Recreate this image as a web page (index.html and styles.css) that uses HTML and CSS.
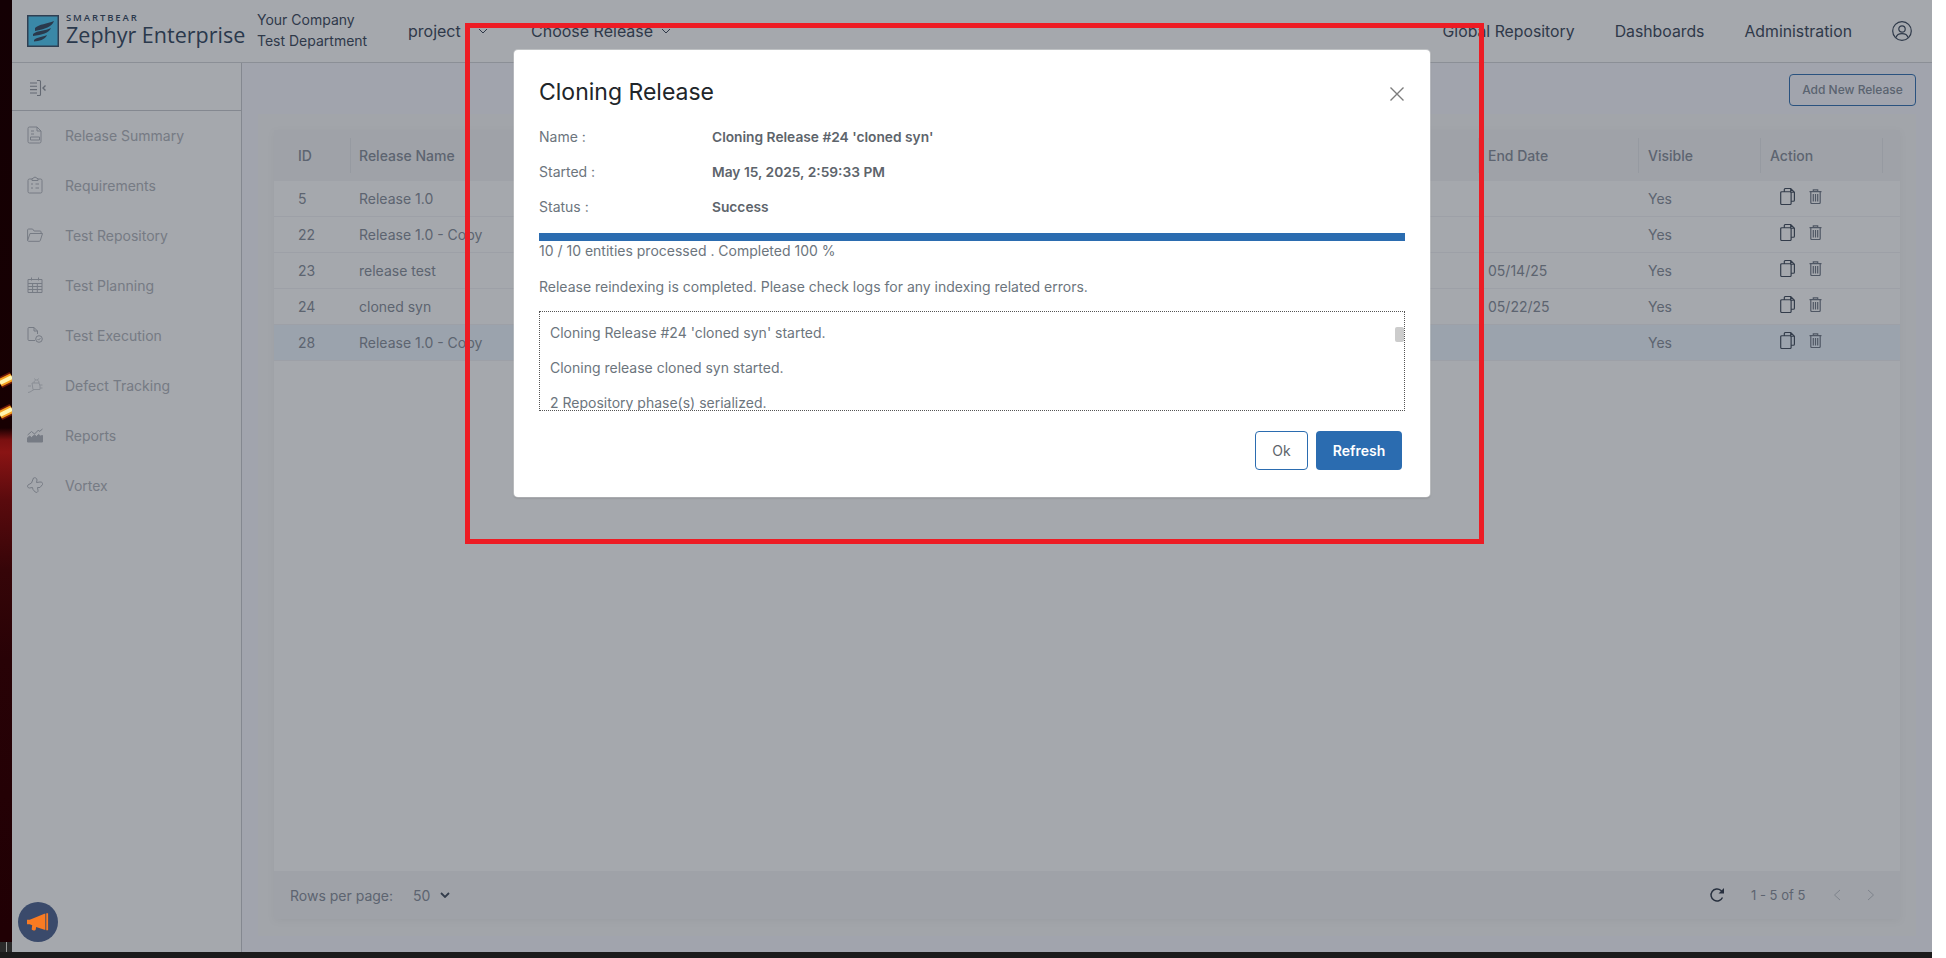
FILE: index.html
```html
<!DOCTYPE html>
<html lang="en">
<head>
<meta charset="utf-8">
<title>Zephyr Enterprise - Cloning Release</title>
<link rel="stylesheet" href="styles.css">
</head>
<body>
<svg class="sprite" width="0" height="0" aria-hidden="true">
  <symbol id="chev" viewBox="0 0 10 6"><path d="M1 1l4 4 4-4" fill="none" stroke="currentColor" stroke-width="1"/></symbol>
  <symbol id="copy" viewBox="0 0 14 16"><path d="M1.600 3.500H9.400a1 1 0 0 1 1 1v10a1 1 0 0 1-1 1H1.600a1 1 0 0 1-1-1v-10a1 1 0 0 1 1-1zM4 3.500v-2a1 1 0 0 1 1-1h5l3.500 3.500v7.500a1 1 0 0 1-1 1h-2M10 .5V4h3.500" fill="none" stroke="currentColor" stroke-width="1.100"/></symbol>
  <symbol id="trash" viewBox="0 0 13 15"><path d="M.5 2.700h12M4.300 2.700V.8h4.400v1.900M1.800 2.700v10.800a1 1 0 0 0 1 1h7.400a1 1 0 0 0 1-1V2.700M4.300 5v7.500M6.500 5v7.500M8.700 5v7.500" fill="none" stroke="currentColor" stroke-width="1.200"/></symbol>
</svg>
<div class="screen">
  <div class="desk">
    <div class="wallpaper">
      <svg class="streaks" viewBox="0 0 12 942" preserveAspectRatio="none" aria-hidden="true">
        <path d="M0 383L12 377M0 415L12 409" stroke="#b02a10" stroke-width="11" fill="none" opacity=".55"/>
        <path d="M0 383L12 377M0 415L12 409" stroke="#f4a020" stroke-width="8" fill="none"/>
        <path d="M0 383L12 377M0 415L12 409" stroke="#fff6b0" stroke-width="4" fill="none"/>
      </svg>
      <div class="taskstub"><span class="taskline"></span></div>
    </div>
    <div class="app">
      <header class="topbar">
        <div class="brand">
          <svg class="logo" viewBox="0 0 32 32" aria-hidden="true">
            <rect x=".75" y=".75" width="30.500" height="30.500" class="logo-box"/>
            <path class="logo-wing" d="M8 13C12 9 20 9 27 6 25 12 18 14 8 16zM6 19C11 15 18 16 24 13 22 18 15 20 6 21zM7 25C10 22 15 22 20 20 18 25 12 26 7 26.500z"/>
          </svg>
          <div class="brand-text">
            <span class="brand-top">SMARTBEAR</span>
            <span class="brand-name">Zephyr Enterprise</span>
          </div>
        </div>
        <div class="company"><span>Your Company</span><span>Test Department</span></div>
        <div class="picker picker-project"><span>project</span><svg class="chev"><use href="#chev"/></svg></div>
        <div class="picker picker-release"><span>Choose Release</span><svg class="chev"><use href="#chev"/></svg></div>
        <nav class="topnav">
          <span>Global Repository</span>
          <span>Dashboards</span>
          <span>Administration</span>
          <svg class="avatar" viewBox="0 0 20 20" aria-hidden="true"><circle cx="10" cy="10" r="9.300"/><circle cx="10" cy="8" r="3.200"/><path d="M4 16.500c.8-2.800 3-3.800 6-3.800s5.200 1 6 3.800"/></svg>
        </nav>
      </header>
      <div class="body">
        <aside class="sidebar">
          <div class="collapse">
            <svg class="collapse-icon" viewBox="0 0 17 18" aria-hidden="true"><path d="M1 4h7M1 7.300h7M1 10.600h7M1 14h7M8 1.500h2.500a1 1 0 0 1 1 1v13a1 1 0 0 1-1 1H8"/><path class="collapse-arrow" d="M16.500 6.500L14 9l2.500 2.500"/></svg>
          </div>
          <ul class="menu">
            <li><svg class="mi" viewBox="0 0 16 18"><path d="M2.500 1H10l4 4v10.500a1.500 1.500 0 0 1-1.500 1.500h-10A1.500 1.500 0 0 1 1 15.500v-13A1.500 1.500 0 0 1 2.500 1zM10 1v4h4M4 5h3M4 8h3M3.500 11h9v3h-9z"/></svg>Release Summary</li>
            <li><svg class="mi" viewBox="0 0 16 18"><path d="M5 3H2.500A1.500 1.500 0 0 0 1 4.500v11A1.500 1.500 0 0 0 2.500 17h11a1.500 1.500 0 0 0 1.500-1.500v-11A1.500 1.500 0 0 0 13.500 3H11M5 4.500V2.800L8 1l3 1.800v1.700zM4 8h2M8.500 8H12M4 12h2M8.500 12H12"/></svg>Requirements</li>
            <li><svg class="mi" viewBox="0 0 16 14"><path d="M.6 12.500V2a1 1 0 0 1 1-1h4l1.500 2h6a1 1 0 0 1 1 1v1M.6 12.500L3 5.500h12.500l-2.200 7a1 1 0 0 1-1 .8H1.500a1 1 0 0 1-.9-.8z"/></svg>Test Repository</li>
            <li><svg class="mi" viewBox="0 0 16 17"><path d="M1 3h14v13H1zM1 7h14M1 10h14M1 13h14M5.600 7v9M10.300 7v9M4.500 1v3M11.500 1v3"/></svg>Test Planning</li>
            <li><svg class="mi" viewBox="0 0 16 16"><path d="M8 13.500H2a1 1 0 0 1-1-1v-11a1 1 0 0 1 1-1h5l3.500 3.500v3M7 .5V4h3.500"/><circle cx="12" cy="12" r="3.300"/><path d="M10.500 12l1.100 1.100 1.900-2"/></svg>Test Execution</li>
            <li class="menu-faint"><svg class="mi" viewBox="0 0 16 16"><path d="M5 6h7l1 3v3.500h-7zM7 6c0-2 1-3 2.500-3S12 4 12 6M7.500 1.500l1 1.500M11.500 1.500l-1 1.500M13 8h2.500M13 11h2.500M4 9H1M7 12.500L3 15M3 15L1 15.500"/></svg>Defect Tracking</li>
            <li><svg class="mi" viewBox="0 0 16 14"><path d="M.6 7L4.500 3.500l3 2.500 4-4 1 1.500L15.500 1"/><path class="mi-fill" d="M.5 10l2-2 2 1.500L7.500 7l2 1.500 2-2 2 1.500 2-.5v6.500H.5z"/></svg>Reports</li>
            <li><svg class="mi" viewBox="0 0 16 16"><path d="M6.500 1C8 .3 10 1 10 3L9.500 5.500 13 5c2-.2 3 1 2.500 2.500L13 10.500H10.500L11 13.500c.2 1.800-1.500 2.500-2.800 1.500L6 12.500l-.5-2L2.500 11C.5 11 0 9 1 8L4.500 6z"/></svg>Vortex</li>
          </ul>
        </aside>
        <main class="main">
          <div class="toolbar"><button class="add-btn" type="button">Add New Release</button></div>
          <section class="card">
            <div class="table">
              <div class="row head">
                <div class="th th-id">ID</div><div class="th th-name">Release Name</div><div class="th">End Date</div><div class="th">Visible</div><div class="th">Action</div>
              </div>
              <div class="row">
                <div class="td td-id">5</div><div class="td td-name">Release 1.0</div><div class="td"></div><div class="td">Yes</div>
                <div class="td actions"><svg class="act-copy"><use href="#copy"/></svg><svg class="act-trash"><use href="#trash"/></svg></div>
              </div>
              <div class="row">
                <div class="td td-id">22</div><div class="td td-name">Release 1.0 - Copy</div><div class="td"></div><div class="td">Yes</div>
                <div class="td actions"><svg class="act-copy"><use href="#copy"/></svg><svg class="act-trash"><use href="#trash"/></svg></div>
              </div>
              <div class="row">
                <div class="td td-id">23</div><div class="td td-name">release test</div><div class="td">05/14/25</div><div class="td">Yes</div>
                <div class="td actions"><svg class="act-copy"><use href="#copy"/></svg><svg class="act-trash"><use href="#trash"/></svg></div>
              </div>
              <div class="row">
                <div class="td td-id">24</div><div class="td td-name">cloned syn</div><div class="td">05/22/25</div><div class="td">Yes</div>
                <div class="td actions"><svg class="act-copy"><use href="#copy"/></svg><svg class="act-trash"><use href="#trash"/></svg></div>
              </div>
              <div class="row selected">
                <div class="td td-id">28</div><div class="td td-name">Release 1.0 - Copy</div><div class="td"></div><div class="td">Yes</div>
                <div class="td actions"><svg class="act-copy"><use href="#copy"/></svg><svg class="act-trash"><use href="#trash"/></svg></div>
              </div>
              <div class="table-space"></div>
              <footer class="pager">
                <span class="rows-label">Rows per page:</span>
                <span class="rows-value">50</span>
                <svg class="rows-chev" viewBox="0 0 10 6"><path d="M1 1l4 4 4-4"/></svg>
                <svg class="reload" viewBox="0 0 16 16"><path d="M13.500 10.500A6 6 0 1 1 12 3.500L14.500 5.500"/><path class="reload-tip" d="M15 1v5.500H9.500z"/></svg>
                <span class="count">1 - 5 of 5</span>
                <svg class="page-arrow" viewBox="0 0 8 12"><path d="M7 1L1.500 6 7 11"/></svg>
                <svg class="page-arrow page-next" viewBox="0 0 8 12"><path d="M1 1l5.500 5L1 11"/></svg>
              </footer>
            </div>
          </section>
        </main>
      </div>
      <div class="backdrop"></div>
      <div class="modal" role="dialog">
        <div class="modal-head">
          <h2 class="modal-title">Cloning Release</h2>
          <svg class="close" viewBox="0 0 14 14" aria-hidden="true"><path d="M.5.500l13 13M13.500.500l-13 13"/></svg>
        </div>
        <dl class="facts">
          <div class="fact"><dt>Name :</dt><dd>Cloning Release #24 'cloned syn'</dd></div>
          <div class="fact"><dt>Started :</dt><dd>May 15, 2025, 2:59:33 PM</dd></div>
          <div class="fact"><dt>Status :</dt><dd>Success</dd></div>
        </dl>
        <div class="progress"></div>
        <p class="progress-text">10 / 10 entities processed . Completed 100 %</p>
        <p class="notice">Release reindexing is completed. Please check logs for any indexing related errors.</p>
        <div class="log">
          <p>Cloning Release #24 'cloned syn' started.</p>
          <p>Cloning release cloned syn started.</p>
          <p>2 Repository phase(s) serialized.</p>
          <span class="thumb"></span>
        </div>
        <div class="modal-foot">
          <button class="btn btn-ok" type="button">Ok</button>
          <button class="btn btn-refresh" type="button">Refresh</button>
        </div>
      </div>
      <div class="annotation"></div>
      <div class="announce">
        <svg viewBox="0 0 24 20" aria-hidden="true"><path d="M0 7h3l16-6.500h1V18h-1L10 15l-.5 2.500c-.3 1-1.500 1.500-3 1-1-.3-1.500-1-1.300-2L5.700 13 3 12H0zM21 0h2v18.500h-2z"/></svg>
      </div>
    </div>
  </div>
  <div class="taskbar"></div>
</div>
</body>
</html>
```
FILE: styles.css
```css
* { box-sizing: border-box; }
html, body { margin: 0; height: 100%; background: #fff; overflow: hidden; }
body { font-family: Inter, "Liberation Sans", sans-serif; font-size: 14px; }
.sprite { display: block; }

.screen { width: 1932px; height: 958px; display: flex; flex-direction: column; }
.desk { flex: 1; display: flex; min-height: 0; }
.taskbar { height: 6px; background: #1b1b1b; }

.wallpaper {
  width: 12px; position: relative; display: flex; flex-direction: column; justify-content: flex-end;
  background: linear-gradient(180deg, #140004 0, #170002 428px, #7a1010 440px, #8a1414 452px, #5a0a0d 500px, #360508 570px, #280206 660px, #200004 930px);
}
.streaks { position: absolute; left: 0; top: 0; width: 12px; height: 942px; }
.taskstub { height: 10px; background: #2a2a2a; position: relative; }
.taskline { display: block; width: 1px; height: 10px; background: #9a9a9a; margin-left: 6px; }

.app { width: 1920px; position: relative; display: flex; flex-direction: column; background: #fff; overflow: hidden; }

.topbar { height: 63px; flex: none; display: flex; align-items: center; padding: 0 20px 1px 15px; border-bottom: 1px solid #d2d4d8; color: #344154; }
.brand { display: flex; align-items: center; gap: 7px; width: 230px; flex: none; }
.logo { width: 32px; height: 32px; flex: none; }
.logo-box { fill: #48c8f4; stroke: #344a62; stroke-width: 1.500; }
.logo-wing { fill: #2c4058; }
.brand-text { display: flex; flex-direction: column; font-family: "Open Sans", sans-serif; color: #2c4058; margin-top: -3px; }
.brand-top { font-size: 9.500px; font-weight: 600; letter-spacing: 1.900px; line-height: 11px; }
.brand-name { font-size: 21.500px; line-height: 24px; white-space: nowrap; }
.company { display: flex; flex-direction: column; font-size: 14px; line-height: 21px; width: 151px; flex: none; margin-top: -1px; }
.picker { display: flex; align-items: center; gap: 17px; font-size: 16px; margin-top: 1px; }
.picker-project { width: 123px; flex: none; }
.picker-release { gap: 8px; }
.chev { width: 10px; height: 6px; }
.topnav { margin-left: auto; margin-top: 1px; display: flex; align-items: center; gap: 40px; font-size: 15.800px; }
.avatar { width: 20px; height: 20px; fill: none; stroke: #344154; stroke-width: 1.200; }

.body { flex: 1; display: flex; min-height: 0; }
.sidebar { width: 230px; flex: none; border-right: 1px solid #c7c9ce; }
.collapse { height: 48px; border-bottom: 1px solid #c7c9ce; display: flex; align-items: center; padding: 2px 0 0 17px; }
.collapse-icon { width: 17px; height: 18px; fill: none; stroke: #8f939b; stroke-width: 1.100; }
.collapse-arrow { stroke-width: 1.400; }
.menu { list-style: none; margin: 0; padding: 0; color: #aeb1b8; }
.menu li { height: 50px; display: flex; align-items: center; gap: 22px; padding: 0 0 2px 15px; }
.mi { width: 16px; height: 18px; flex: none; fill: none; stroke: #aeb1b8; stroke-width: 1; }
.mi-fill { fill: #aeb1b8; }
.menu-faint .mi { stroke: #d0d2d6; }

.main { flex: 1; min-width: 0; display: flex; flex-direction: column; padding: 11px 16px 16px; background: #f8f9ff; }
.toolbar { display: flex; justify-content: flex-end; margin-bottom: 8px; }
.add-btn { width: 127px; height: 32px; border: 1px solid #2b6cb0; border-radius: 4px; background: transparent; color: #7f8896; font: 500 12px Inter, sans-serif; padding: 0 0 2px; }
.card { flex: 1; padding: 16px 16px 17px; background: #fafafa; min-height: 0; }
.table { height: 100%; display: flex; flex-direction: column; background: #fff; box-shadow: 0 2px 8px rgba(0,0,0,.05); }
.row { display: grid; grid-template-columns: 77px 1128px 160px 122px 122px 17px; height: 36px; align-items: center; border-bottom: 1px solid #f1f2f4; color: #838a96; }
.row.head { height: 51px; background: #f5f5f6; border-bottom: 0; }
.row.selected { background: #eef7ff; }
.th { height: 35px; display: flex; align-items: center; padding-left: 9px; border-right: 1px solid #e6e7ea; font-weight: 500; }
.th-id { padding-left: 24px; }
.th-name { padding-left: 8px; }
.td { padding-left: 9px; white-space: nowrap; }
.td.td-id { padding-left: 24px; }
.td.td-name { padding-left: 8px; }
.actions { display: flex; align-items: center; gap: 14px; padding-left: 19px; height: 35px; padding-bottom: 4px; }
.act-copy { width: 15px; height: 17px; color: #3b4656; }
.act-trash { width: 13px; height: 15px; color: #6c7482; }
.table-space { flex: 1; }
.pager { height: 48px; flex: none; background: #f5f5f6; display: flex; align-items: center; padding: 0 25px 0 16px; color: #838a96; font-size: 14px; }
.rows-label { width: 123px; }
.rows-value { width: 27px; }
.rows-chev { width: 10px; height: 6px; fill: none; stroke: #3b4656; stroke-width: 1.800; }
.reload { width: 16px; height: 16px; margin-left: auto; fill: none; stroke: #263040; stroke-width: 1.400; }
.reload-tip { fill: #263040; stroke: none; }
.count { margin-left: 26px; font-size: 13px; color: #838a96; width: 82px; }
.page-arrow { width: 8px; height: 12px; fill: none; stroke: #bcc0c6; stroke-width: 1; }
.page-next { margin-left: 26px; }

.backdrop { position: absolute; inset: 0; background: rgba(40,48,60,.42); }

.modal { position: absolute; left: 502px; top: 50px; width: 916px; height: 447px; background: #fff; border-radius: 4px; padding: 27px 25px 0; box-shadow: 0 0 0 1px rgba(255,255,255,.3), 0 1px 2px rgba(0,0,0,.25); color: #6c757d; font-size: 14px; }
.modal-head { display: flex; align-items: center; justify-content: space-between; height: 29px; }
.modal-title { margin: 2px 0 0; font-size: 23px; font-weight: 400; line-height: 29px; color: #212529; }
.close { width: 14px; height: 14px; margin: 4px 1px 0 0; fill: none; stroke: #7c7c7c; stroke-width: 1.400; }
.facts { margin: 13px 0 0; }
.fact { display: flex; height: 35px; align-items: center; line-height: 21px; }
.fact dt { width: 173px; flex: none; }
.fact dd { margin: 0; padding-top: 2px; font-size: 13.750px; font-weight: 600; color: #5d646b; }
.progress { height: 8px; margin-top: 9px; background: #2b6cb0; }
.progress-text { margin: 0; line-height: 20px; }
.notice { margin: 15px 0 14px; line-height: 21px; }
.log { position: relative; height: 100px; border: 1px dotted #555; padding: 3px 0 0 10px; overflow: hidden; }
.log p { margin: 0; height: 35px; line-height: 35px; }
.thumb { position: absolute; right: 0; top: 15px; width: 9px; height: 15px; background: #ccc; border-radius: 2px; }
.modal-foot { display: flex; justify-content: flex-end; gap: 8px; margin: 20px 3px 0 0; }
.btn { height: 39px; border-radius: 4px; font: 500 14px Inter, sans-serif; padding: 0; }
.btn-ok { width: 53px; background: #fff; border: 1px solid #2b6cb0; color: #5d646b; font-weight: 400; }
.btn-refresh { width: 86px; background: #2b6cb0; border: 0; color: #fff; font-weight: 600; }

.annotation { position: absolute; left: 453px; top: 23px; width: 1019px; height: 521px; border: 5px solid #ed1c24; pointer-events: none; }
.announce { position: absolute; left: 6px; top: 902px; width: 40px; height: 40px; border-radius: 50%; background: #3a4a6b; display: flex; align-items: center; justify-content: center; }
.announce svg { width: 22px; height: 19px; fill: #f97b22; }
```
